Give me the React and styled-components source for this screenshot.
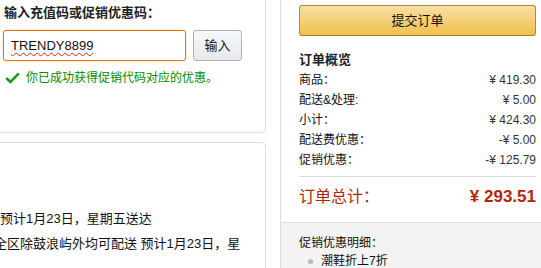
import React from "react"
import styled, { createGlobalStyle } from "styled-components"

const Global = createGlobalStyle`
  html, body {
    margin: 0;
    padding: 0;
    background: #fff;
  }
  body {
    font-family: "Liberation Sans", Arial, "Noto Sans CJK SC", sans-serif;
    color: #111;
    width: 541px;
    height: 268px;
    overflow: hidden;
  }
`

const Page = styled.div`
  display: flex;
  width: 541px;
  height: 268px;
  overflow: hidden;
`

const LeftCol = styled.div`
  width: 266px;
  flex: none;
  display: flex;
  flex-direction: column;
  gap: 9px;
`

const CodeBox = styled.div`
  height: 133px;
  box-sizing: border-box;
  border-right: 1px solid #ddd;
  border-bottom: 1px solid #ddd;
  border-bottom-right-radius: 5px;
  padding: 3px 0 0 4px;
`

const Label = styled.div`
  font-size: 13px;
  font-weight: bold;
  line-height: 20px;
  color: #222;
`

const InputRow = styled.div`
  display: flex;
  gap: 7px;
  margin: 7px 0 0 -1px;
`

const FakeInput = styled.div`
  width: 183px;
  height: 31px;
  box-sizing: border-box;
  border: 1px solid #e77600;
  border-radius: 3px;
  box-shadow: 0 0 2px rgba(228, 121, 17, 0.45);
  padding-left: 7px;
  font-size: 13px;
  line-height: 29px;
  color: #111;
`

const Misspelled = styled.span`
  text-decoration: underline wavy #e02020;
  text-decoration-thickness: 1px;
  text-underline-offset: 2px;
`

const GreyButton = styled.div`
  width: 49px;
  height: 31px;
  box-sizing: border-box;
  border: 1px solid #adb1b8;
  border-radius: 3px;
  background: linear-gradient(#f7f8fa, #e7e9ec);
  font-size: 13px;
  line-height: 29px;
  text-align: center;
  color: #111;
`

const Success = styled.div`
  display: flex;
  align-items: center;
  gap: 6px;
  margin: 9px 0 0 1px;
  font-size: 12px;
  line-height: 16px;
  color: #008a00;
`

const DeliveryBox = styled.div`
  flex: 1;
  border-top: 1px solid #ddd;
  border-right: 1px solid #ddd;
  border-top-right-radius: 5px;
  padding-top: 63px;
`

const DeliveryLine = styled.div`
  font-size: 13px;
  line-height: 25px;
  color: #111;
  white-space: nowrap;
  margin-left: ${({ $shift }) => $shift || 0}px;
`

const RightCol = styled.div`
  margin-left: 14px;
  flex: 1;
  border-left: 1px solid #ddd;
  display: flex;
  flex-direction: column;
`

const Summary = styled.div`
  padding: 5px 5px 0 18px;
`

const SubmitButton = styled.div`
  height: 31px;
  box-sizing: border-box;
  border: 1px solid #b38b2e;
  border-bottom-color: #9c7e31;
  border-radius: 3px;
  background: linear-gradient(#f7dfa5, #f0c14b);
  font-size: 13px;
  line-height: 29px;
  text-align: center;
  color: #111;
`

const Heading = styled.div`
  margin-top: 14px;
  font-size: 13px;
  font-weight: bold;
  line-height: 20px;
  color: #222;
`

const Row = styled.div`
  display: flex;
  justify-content: space-between;
  font-size: 12px;
  line-height: 20px;
  color: #111;
`

const Amount = styled.span`
  color: #333;
`

const Divider = styled.div`
  margin-top: 6px;
  border-top: 1px solid #ddd;
`

const TotalRow = styled.div`
  display: flex;
  justify-content: space-between;
  padding: 9px 0 14px;
  line-height: 22px;
  color: #b12704;
  font-size: 16px;
`

const TotalValue = styled.span`
  font-weight: bold;
  font-size: 17px;
`

const Promo = styled.div`
  flex: 1;
  background: #f3f3f3;
  border-top: 1px solid #ddd;
  padding: 11px 5px 0 18px;
  font-size: 12px;
  line-height: 18px;
  color: #111;
`

const PromoList = styled.ul`
  margin: 0;
  padding: 0 0 0 22px;
  list-style: none;
`

const PromoItem = styled.li`
  position: relative;
  &::before {
    content: "";
    position: absolute;
    left: -13px;
    top: 7px;
    width: 5px;
    height: 5px;
    border-radius: 50%;
    background: #bbb;
  }
`

const Check = () => (
  <svg width="15" height="12" viewBox="0 0 15 12">
    <path d="M1.2 6 L5.4 10 L13.8 1.4" fill="none" stroke="#1f9a1f" strokeWidth="2.6" />
  </svg>
)

const rows = [
  ["商品：", "¥ 419.30"],
  ["配送&处理:", "¥ 5.00"],
  ["小计：", "¥ 424.30"],
  ["配送费优惠：", "-¥ 5.00"],
  ["促销优惠：", "-¥ 125.79"],
]

export default function App() {
  return (
    <Page>
      <Global />
      <LeftCol>
        <CodeBox>
          <Label>输入充值码或促销优惠码：</Label>
          <InputRow>
            <FakeInput>
              <Misspelled>TRENDY8899</Misspelled>
            </FakeInput>
            <GreyButton>输入</GreyButton>
          </InputRow>
          <Success>
            <Check />
            你已成功获得促销代码对应的优惠。
          </Success>
        </CodeBox>
        <DeliveryBox>
          <DeliveryLine>预计1月23日，星期五送达</DeliveryLine>
          <DeliveryLine $shift={-6}>全区除鼓浪屿外均可配送 预计1月23日，星</DeliveryLine>
        </DeliveryBox>
      </LeftCol>
      <RightCol>
        <Summary>
          <SubmitButton>提交订单</SubmitButton>
          <Heading>订单概览</Heading>
          {rows.map(([k, v]) => (
            <Row key={k}>
              <span>{k}</span>
              <Amount>{v}</Amount>
            </Row>
          ))}
          <Divider />
          <TotalRow>
            <span>订单总计：</span>
            <TotalValue>¥ 293.51</TotalValue>
          </TotalRow>
        </Summary>
        <Promo>
          <div>促销优惠明细：</div>
          <PromoList>
            <PromoItem>潮鞋折上7折</PromoItem>
          </PromoList>
        </Promo>
      </RightCol>
    </Page>
  )
}
